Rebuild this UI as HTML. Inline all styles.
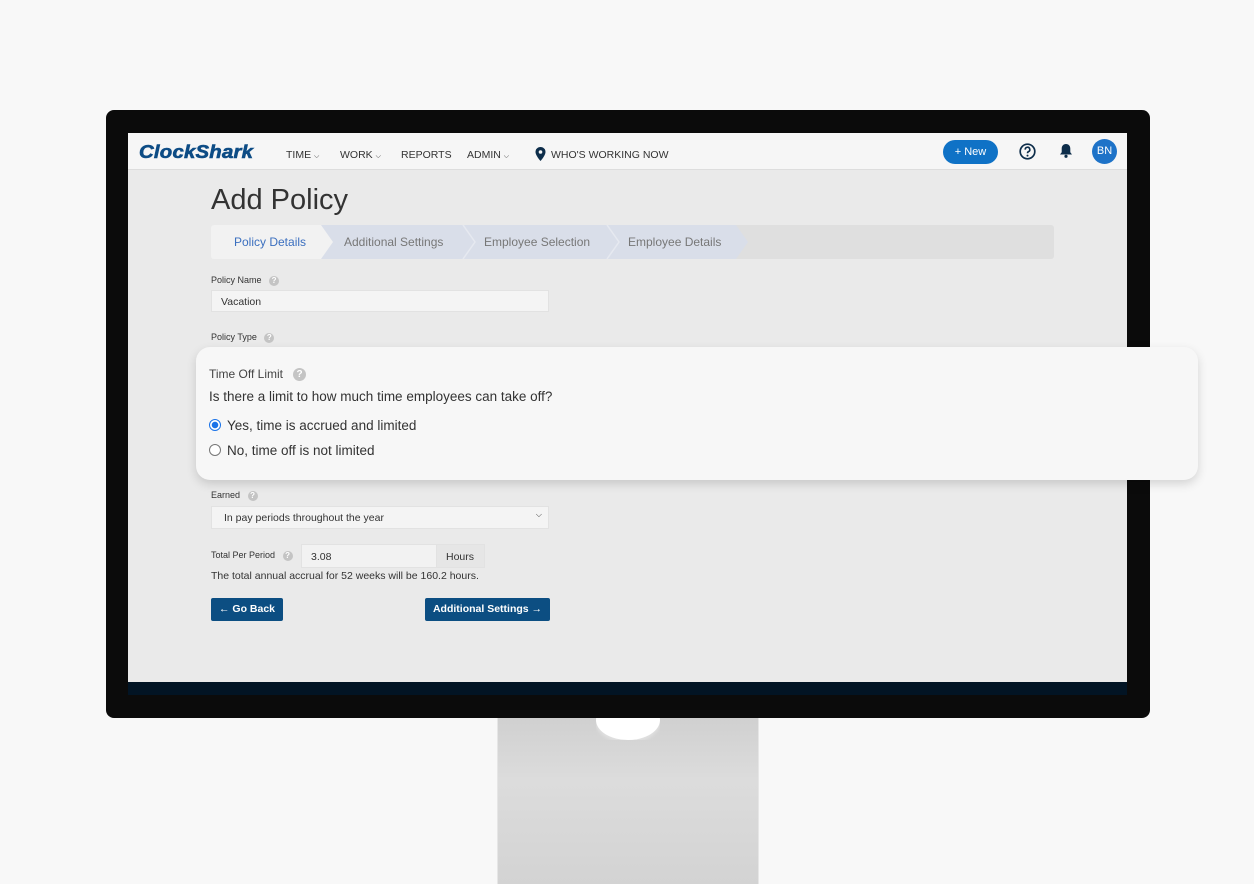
<!DOCTYPE html>
<html><head><meta charset="utf-8"><style>
*{margin:0;padding:0;box-sizing:border-box}
body{width:1254px;height:884px;background:#f8f8f8;position:relative;overflow:hidden;font-family:"Liberation Sans",sans-serif;color:#333}
.abs{position:absolute}
.stand{left:497px;top:712px;width:262px;height:172px;background:linear-gradient(#cfcfcf,#dcdcdc 40%,#d3d3d3);border-left:1px solid #e6e6e6;border-right:1px solid #e6e6e6}
.notch{left:596px;top:700px;width:64px;height:40px;border-radius:50%;background:#fff;box-shadow:0 3px 3px #e0e0e0}
.bezel{left:106px;top:110px;width:1044px;height:608px;background:#0b0b0b;border-radius:8px}
.screen{left:128px;top:133px;width:999px;height:562px;background:#eaeaea;overflow:hidden}
.nav{left:0;top:0;width:999px;height:37px;background:#f6f6f6;border-bottom:1px solid #ddd}
.nav span{position:absolute;top:16px;font-size:10.5px;color:#333;white-space:nowrap}
.nav small{font-size:7px}
.logo{position:absolute;left:11px;top:8px;font:italic 900 18.5px "Liberation Sans",sans-serif;color:#0d4c85;letter-spacing:.2px;transform:scaleX(1.1);transform-origin:left;-webkit-text-stroke:.6px #0d4c85}
.lbl{position:absolute;font-size:9px;color:#333}
.q{display:inline-block;width:10px;height:10px;border-radius:50%;background:#c4c4c4;color:#fff;font-size:8px;text-align:center;line-height:10px;font-weight:bold;vertical-align:middle}
.inp{position:absolute;background:#f4f4f4;border:1px solid #e2e2e2;font-size:10.5px;color:#333;white-space:nowrap}
.btn{position:absolute;background:#0c4e82;color:#fff;font-size:10.5px;border-radius:2px;text-align:center;line-height:23px;height:23px;font-weight:bold;white-space:nowrap}
.card{left:196px;top:347px;width:1002px;height:133px;background:#f7f7f7;border-radius:14px;box-shadow:0 4px 10px rgba(0,0,0,.15)}
.radio{position:absolute;width:12px;height:12px;border-radius:50%;border:1px solid #777;background:#fff}
</style></head><body>
<div class="abs stand"></div>
<div class="abs bezel"></div>
<div class="abs notch" style="clip-path:inset(18px 0 0 0)"></div>
<div class="abs screen">
  <div class="abs nav">
    <div class="logo">ClockShark</div>
    <span style="left:158px">TIME <small>⌵</small></span>
    <span style="left:212px">WORK <small>⌵</small></span>
    <span style="left:273px">REPORTS</span>
    <span style="left:339px">ADMIN <small>⌵</small></span>
    <svg class="abs" style="left:407px;top:14px" width="11" height="14" viewBox="0 0 11 14"><path d="M5.5 0C2.5 0 .5 2.2.5 5c0 3.5 5 9 5 9s5-5.5 5-9C10.5 2.2 8.5 0 5.5 0z" fill="#0d2d4a"/><circle cx="5.5" cy="5" r="1.8" fill="#f6f6f6"/></svg>
    <span style="left:423px">WHO'S WORKING NOW</span>
    <div class="abs" style="left:815px;top:7px;width:55px;height:24px;border-radius:12px;background:#0f72c6;color:#fff;font-size:11px;text-align:center;line-height:24px">+ New</div>
    <svg class="abs" style="left:891px;top:10px" width="17" height="17" viewBox="0 0 17 17"><circle cx="8.5" cy="8.5" r="7.3" fill="none" stroke="#0d2d4a" stroke-width="1.7"/><path d="M6.2 6.6a2.3 2.3 0 1 1 3.3 2c-.8.4-1 .8-1 1.6" fill="none" stroke="#0d2d4a" stroke-width="1.6"/><circle cx="8.5" cy="12.6" r="1" fill="#0d2d4a"/></svg>
    <svg class="abs" style="left:931px;top:10px" width="14" height="16" viewBox="0 0 14 16"><path d="M7 1c-2.7 0-4.3 2-4.3 4.6v3.6L1 11.5h12l-1.7-2.3V5.6C11.3 3 9.7 1 7 1z" fill="#0d2d4a"/><circle cx="7" cy="13.3" r="1.6" fill="#0d2d4a"/></svg>
    <div class="abs" style="left:964px;top:6px;width:25px;height:25px;border-radius:50%;background:#1e73c8;color:#fff;font-size:11px;text-align:center;line-height:25px">BN</div>
  </div>
  <div class="abs" style="left:83px;top:51px;font-size:29px;color:#333;font-weight:300">Add Policy</div>
  <svg class="abs" style="left:83px;top:92px" width="843" height="34" viewBox="0 0 843 34">
    <rect x="0" y="0" width="843" height="34" rx="3" fill="#dfdfdf"/>
    <path d="M110 0H525L537 17L525 34H110Z" fill="#d9dee9"/>
    <path d="M3 0H110L122 17L110 34H3Q0 34 0 31V3Q0 0 3 0Z" fill="#f2f2f2"/>
    <path d="M252 0L264 17L252 34M396 0L408 17L396 34" fill="none" stroke="#e6e9f0" stroke-width="1.5"/>
    <text x="23" y="21" font-size="12" fill="#3b6fbf" font-family="Liberation Sans">Policy Details</text>
    <text x="133" y="21" font-size="12" fill="#777" font-family="Liberation Sans">Additional Settings</text>
    <text x="273" y="21" font-size="12" fill="#777" font-family="Liberation Sans">Employee Selection</text>
    <text x="417" y="21" font-size="12" fill="#777" font-family="Liberation Sans">Employee Details</text>
  </svg>
  <div class="lbl" style="left:83px;top:142px">Policy Name &nbsp;&nbsp;<span class="q">?</span></div>
  <div class="inp" style="left:83px;top:157px;width:338px;height:22px;padding:5px 9px">Vacation</div>
  <div class="lbl" style="left:83px;top:199px">Policy Type &nbsp;&nbsp;<span class="q">?</span></div>
  <div class="lbl" style="left:83px;top:357px">Earned &nbsp;&nbsp;<span class="q">?</span></div>
  <div class="inp" style="left:83px;top:373px;width:338px;height:23px;padding:5px 12px">In pay periods throughout the year<span style="position:absolute;right:6px;top:3px;font-size:8px">⌵</span></div>
  <div class="lbl" style="left:83px;top:417px">Total Per Period &nbsp;&nbsp;<span class="q">?</span></div>
  <div class="inp" style="left:173px;top:411px;width:136px;height:24px;padding:6px 9px;background:#f2f2f2">3.08</div>
  <div class="inp" style="left:308px;top:411px;width:49px;height:24px;padding:6px 9px;background:#e6e6e6">Hours</div>
  <div class="abs" style="left:83px;top:437px;font-size:10.5px">The total annual accrual for 52 weeks will be 160.2 hours.</div>
  <div class="btn" style="left:83px;top:465px;width:72px">&#8592; Go Back</div>
  <div class="btn" style="left:297px;top:465px;width:125px">Additional Settings &#8594;</div>
  <div class="abs" style="left:0;top:549px;width:999px;height:13px;background:#021424"></div>
</div>
<div class="abs card">
  <div class="abs" style="left:13px;top:20px;font-size:12px;color:#444">Time Off Limit &nbsp;&nbsp;<span class="q" style="width:13px;height:13px;line-height:13px;font-size:10px">?</span></div>
  <div class="abs" style="left:13px;top:42px;font-size:13.5px;color:#333">Is there a limit to how much time employees can take off?</div>
  <div class="radio" style="left:13px;top:72px;border:1.5px solid #1a73e8;background:radial-gradient(#1a73e8 3px,#fff 3.5px)"></div>
  <div class="abs" style="left:31px;top:71px;font-size:13.5px">Yes, time is accrued and limited</div>
  <div class="radio" style="left:13px;top:97px"></div>
  <div class="abs" style="left:31px;top:96px;font-size:13.5px">No, time off is not limited</div>
</div>
</body></html>
